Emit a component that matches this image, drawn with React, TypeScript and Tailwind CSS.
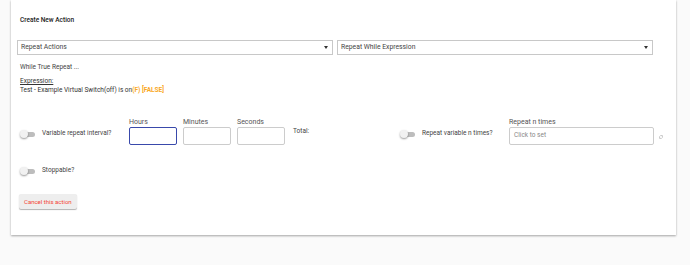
import { ChevronsUpDown } from "lucide-react";

function Toggle() {
  return (
    <div className="relative w-[16px] h-[10px] flex items-center shrink-0">
      <div className="ml-[3px] w-[12px] h-[5px] rounded-full bg-[#bdbdbd]" />
      <div className="absolute left-0 top-[1px] w-[8px] h-[8px] rounded-full bg-[#f1f1f1] shadow-[0_1px_2px_rgba(0,0,0,0.4)]" />
    </div>
  );
}

function SelectBox({ label }: { label: string }) {
  return (
    <div className="flex-1 h-[15px] border border-[#c8c8c8] bg-white flex items-center justify-between pl-[3px] pr-[4px]">
      <span className="text-[6.8px] text-[#444]">{label}</span>
      <span className="w-0 h-0 border-l-[2.5px] border-r-[2.5px] border-t-[3px] border-l-transparent border-r-transparent border-t-[#333]" />
    </div>
  );
}

function TimeField({ label, focused }: { label: string; focused?: boolean }) {
  return (
    <div className="flex flex-col w-[48px]">
      <span className="text-[7px] text-[#555] leading-[7px] mb-[1px]">{label}</span>
      <div
        className={
          focused
            ? "h-[18px] rounded-[2px] border border-[#3949ab] bg-white"
            : "h-[18px] rounded-[2px] border border-[#ccc] bg-white"
        }
      />
    </div>
  );
}

export default function App() {
  return (
    <div
      className="w-[690px] h-[265px] bg-[#fafafa] overflow-hidden"
      style={{ fontFamily: "Roboto, 'Liberation Sans', sans-serif" }}
    >
      <div className="ml-[11px] w-[665px] h-[235px] bg-white shadow-[0_1px_2px_rgba(0,0,0,0.35)] px-[6px] pt-[15px] text-[#333]">
        <h1 className="pl-[3px] text-[6.5px] font-medium text-[#222] leading-[10px]">
          Create New Action
        </h1>
        <div className="mt-[15px] flex gap-[4px] w-[636px]">
          <SelectBox label="Repeat Actions" />
          <SelectBox label="Repeat While Expression" />
        </div>
        <p className="pl-[3px] mt-[7px] text-[6.5px] text-[#444] leading-[10px]">
          While True Repeat ...
        </p>
        <div className="pl-[3px] mt-[5px] text-[6.5px] text-[#333] leading-[9px]">
          <p className="underline">Expression:</p>
          <p>
            Test - Example Virtual Switch(off) is on
            <span className="text-[#f9a825] font-bold">(F) [FALSE]</span>
          </p>
        </div>
        <div className="mt-[24px] flex items-start">
          <div className="flex items-center gap-[6px] pl-[3px] mt-[10px] w-[112px]">
            <Toggle />
            <span className="text-[6.5px] text-[#444]">Variable repeat interval?</span>
          </div>
          <div className="flex gap-[6px]">
            <TimeField label="Hours" focused />
            <TimeField label="Minutes" />
            <TimeField label="Seconds" />
          </div>
          <span className="ml-[8px] mt-[8px] text-[6.5px] text-[#444] w-[107px]">Total:</span>
          <div className="flex items-center gap-[6px] mt-[10px] w-[109px]">
            <Toggle />
            <span className="text-[6.5px] text-[#444]">Repeat variable n times?</span>
          </div>
          <div className="flex flex-col w-[145px]">
            <span className="text-[7px] text-[#555] leading-[7px] mb-[1px]">Repeat n times</span>
            <div className="h-[18px] rounded-[2px] border border-[#ccc] bg-white flex items-center pl-[4px]">
              <span className="text-[6.5px] text-[#888]">Click to set</span>
            </div>
          </div>
          <ChevronsUpDown size={6} className="ml-[4px] mt-[15px] text-[#999] rotate-45" />
        </div>
        <div className="mt-[21px] flex items-center gap-[6px] pl-[3px]">
          <Toggle />
          <span className="text-[6.5px] text-[#444]">Stoppable?</span>
        </div>
        <button className="mt-[18px] ml-[2px] h-[15px] px-[5px] bg-[#eeeeee] rounded-[2px] shadow-[0_1px_1px_rgba(0,0,0,0.3)] text-[6px] text-[#f44336]">
          Cancel this action
        </button>
      </div>
    </div>
  );
}
